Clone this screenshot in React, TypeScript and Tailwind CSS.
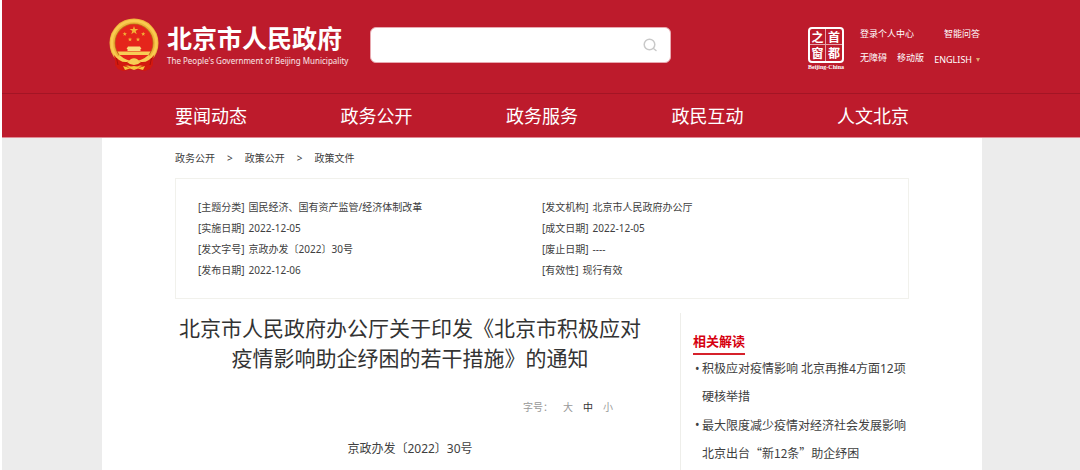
import { Fragment } from "react";

const navItems = ["要闻动态", "政务公开", "政务服务", "政民互动", "人文北京"];

const breadcrumbs = ["政务公开", "政策公开", "政策文件"];

const metaLeft = [
  { label: "[主题分类]", value: "国民经济、国有资产监管/经济体制改革" },
  { label: "[实施日期]", value: "2022-12-05" },
  { label: "[发文字号]", value: "京政办发〔2022〕30号" },
  { label: "[发布日期]", value: "2022-12-06" },
];

const metaRight = [
  { label: "[发文机构]", value: "北京市人民政府办公厅" },
  { label: "[成文日期]", value: "2022-12-05" },
  { label: "[废止日期]", value: "----" },
  { label: "[有效性]", value: "现行有效" },
];

const STAR = "M0,-1 L.2245,-.309 .951,-.309 .363,.118 .588,.809 0,.382 -.588,.809 -.363,.118 -.951,-.309 -.2245,-.309Z";

const Emblem = () => (
  <svg viewBox="0 0 50 54" className="w-[50px] h-[54px] shrink-0" aria-hidden="true">
    <path d="M7 36 L6 47 L9 51 L14 53 L20 52 L25 51 L30 52 L36 53 L41 51 L44 47 L43 36Z" fill="#d3190f" />
    <circle cx="25" cy="25" r="24.500" fill="#f0b53a" />
    <circle cx="25" cy="25" r="22.300" fill="none" stroke="#f9cb50" strokeWidth="2.500" />
    <circle cx="25" cy="25" r="19.500" fill="#b9791c" />
    <circle cx="25" cy="25" r="18.700" fill="#e5251b" />
    <g fill="#f3b437">
      <path d={STAR} transform="translate(25 12.5) scale(4.6)" />
      <path d={STAR} transform="translate(15.8 16) scale(2.3)" />
      <path d={STAR} transform="translate(34.2 16) scale(2.3)" />
      <path d={STAR} transform="translate(21 21.5) scale(2.3)" />
      <path d={STAR} transform="translate(29 21.5) scale(2.3)" />
    </g>
    <path d="M19 28.500H31L32.500 31H17.500Z M18.500 31H31.500V33H18.500Z" fill="#fbdc7a" />
    <path d="M8.500 33.500H41.500L39.500 37H10.500Z" fill="#f8cd55" />
    <path d="M10.500 37H39.500Q34 43.700 25 43.700T10.500 37Z" fill="#e5251b" />
    <path d="M10.500 37Q17 43 25 43T39.500 37L42 40Q35 46.500 25 46.500T8 40Z" fill="#f8cd55" />
    <path d="M5 37Q11 45 18 44Q21 43 22 42L25 44L28 42Q29 43 32 44Q39 45 45 37L43.500 45Q38 49 31 47.500Q25 50 19 47.500Q12 49 6.500 45Z" fill="#d3190f" />
    <path d="M18 44Q20 43 22 41Q25 39.500 28 41Q30 43 32 44Q29 47 25 47T18 44Z" fill="#f8cd55" />
    <path d="M14 48L19 49.500 25 48 31 49.500 36 48 34 52 29 50.500 25 52 21 50.500 16 52Z" fill="#f6c53c" />
    <path d="M7.500 40L9 47M42.500 40L41 47" stroke="#a80f0b" strokeWidth="1" />
  </svg>
);

const Seal = () => (
  <a href="#" className="flex flex-col items-center text-white">
    <span className="grid grid-cols-2 w-[36px] h-[36px] border-2 border-white rounded-sm font-['Noto_Sans_CJK_SC',sans-serif] text-[12px] leading-[15px] font-bold text-center">
      <span className="border-r border-b border-white/60">之</span>
      <span className="border-b border-white/60">首</span>
      <span className="border-r border-white/60">窗</span>
      <span>都</span>
    </span>
    <span className="font-['Liberation_Serif',serif] text-[6px] leading-[8px] font-bold">Beijing-China</span>
  </a>
);

const SearchBox = () => (
  <form className="flex items-center w-[301px] h-[36px] px-3 bg-white border border-[#e8a9b0] rounded-md">
    <input type="text" aria-label="搜索" className="flex-1 min-w-0 text-xs outline-none" />
    <button type="button" aria-label="搜索" className="size-4">
      <svg viewBox="0 0 16 16" fill="none" stroke="#c9c9c9" strokeWidth="1.500" strokeLinecap="round" aria-hidden="true">
        <circle cx="7.500" cy="7.500" r="5.300" />
        <path d="M11.500 11.500L14 13.500" />
      </svg>
    </button>
  </form>
);

const MetaList = ({ items }: { items: { label: string; value: string }[] }) => (
  <dl className="flex-1">
    {items.map(({ label, value }) => (
      <div key={label} className="flex gap-1">
        <dt>{label}</dt>
        <dd>{value}</dd>
      </div>
    ))}
  </dl>
);

const Header = () => (
  <header className="bg-[#bd1b2c] text-white border-b border-[#e08a94]">
    <div className="h-[93px] pl-[2px]">
      <div className="w-[880px] mx-auto h-full flex items-center pb-1 pl-[7px]">
        <a href="#" className="flex items-center gap-2 w-[261px]">
          <Emblem />
          <span className="flex flex-col pt-[2px] whitespace-nowrap">
            <span className="text-[25px] leading-[30px] font-bold">北京市人民政府</span>
            <span className="text-[8px] leading-[16px] text-white/90">
              The People's Government of Beijing Municipality
            </span>
          </span>
        </a>
        <SearchBox />
        <div className="ml-auto pt-2">
          <Seal />
        </div>
        <div className="w-[120px] ml-4 mr-[2px] pt-[5px] flex flex-col gap-2 text-[9px] leading-[16px]">
          <div className="flex justify-between">
            <a href="#">登录个人中心</a>
            <a href="#">智能问答</a>
          </div>
          <div className="flex items-start justify-between">
            <a href="#">无障碍</a>
            <a href="#">移动版</a>
            <button type="button" className="flex items-center gap-1 pt-[2px]">
              ENGLISH
              <svg viewBox="0 0 4 4" className="size-1" aria-hidden="true">
                <path d="M0 0H4L2 4Z" fill="#e0a66a" />
              </svg>
            </button>
          </div>
        </div>
      </div>
    </div>
    <nav className="border-t border-[#a31525] pl-[2px]">
      <div className="w-[734px] mx-auto h-[43px] flex items-center justify-between pt-[2px] text-[18px]">
        {navItems.map((item) => (
          <a key={item} href="#">{item}</a>
        ))}
      </div>
    </nav>
  </header>
);

const Sidebar = () => (
  <aside className="w-[229px] border-l border-[#eeeeea] pl-3">
    <h2 className="inline-block align-top mt-4 h-[26px] leading-[24px] text-[13px] font-bold text-[#d6000f] border-b-2 border-[#d6212b]">
      相关解读
    </h2>
    <ul className="text-xs leading-[28px]">
      <li className="flex">
        <span className="w-[9px] pl-[2px]">•</span>
        <a href="#" className="flex-1">积极应对疫情影响 北京再推4方面12项硬核举措</a>
      </li>
      <li className="flex">
        <span className="w-[9px] pl-[2px]">•</span>
        <a href="#" className="flex-1 font-['Noto_Sans_CJK_SC',sans-serif]">
          最大限度减少疫情对经济社会发展影响 北京出台“新12条”助企纾困
        </a>
      </li>
    </ul>
  </aside>
);

const App = () => {
  return (
    <div lang="zh-CN" className="min-h-screen flex flex-col bg-[#ececec] border-l-2 border-white font-['Noto_Sans','Noto_Sans_CJK_SC',sans-serif] text-[#404040]">
      <Header />
      <div className="flex-1 flex justify-center pl-[2px]">
        <main className="w-[880px] flex flex-col bg-white px-[73px]">
          <nav className="flex gap-3 py-[10px] text-[10px] leading-[20px]">
            {breadcrumbs.map((crumb, i) => (
              <Fragment key={crumb}>
                {i > 0 && <span>&gt;</span>}
                <a href="#">{crumb}</a>
              </Fragment>
            ))}
          </nav>
          <section className="flex border border-[#f1f1ec] px-[22px] pt-[18px] pb-[17px] text-[10px] leading-[21px]">
            <MetaList items={metaLeft} />
            <MetaList items={metaRight} />
          </section>
          <div className="flex-1 flex justify-between pt-[14px]">
            <article className="w-[470px]">
              <h1 className="text-[21px] leading-[30px] text-center text-[#333]">
                北京市人民政府办公厅关于印发《北京市积极应对疫情影响助企纾困的若干措施》的通知
              </h1>
              <div className="flex justify-end gap-[10px] mt-6 pr-8 text-[10px] leading-[20px] text-[#999]">
                <span>字号：</span>
                <button type="button">大</button>
                <button type="button" className="text-[#333]">中</button>
                <button type="button">小</button>
              </div>
              <p className="mt-[22px] text-xs leading-[20px] text-center">京政办发〔2022〕30号</p>
            </article>
            <Sidebar />
          </div>
        </main>
      </div>
    </div>
  );
};

export default App;
